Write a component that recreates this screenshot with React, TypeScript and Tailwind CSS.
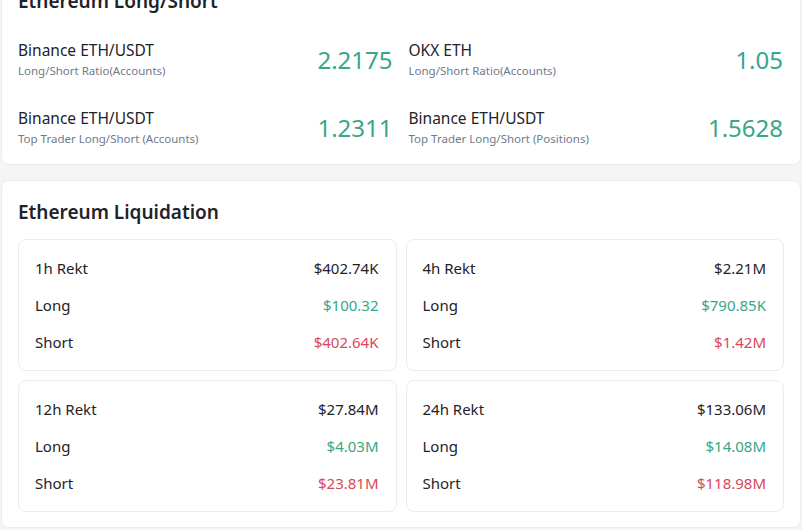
import React from "react";

const ratios = [
  { label: "Binance ETH/USDT", sub: "Long/Short Ratio(Accounts)", value: "2.2175" },
  { label: "OKX ETH", sub: "Long/Short Ratio(Accounts)", value: "1.05" },
  { label: "Binance ETH/USDT", sub: "Top Trader Long/Short (Accounts)", value: "1.2311" },
  { label: "Binance ETH/USDT", sub: "Top Trader Long/Short (Positions)", value: "1.5628" },
];

const liqs = [
  { period: "1h Rekt", total: "$402.74K", long: "$100.32", short: "$402.64K" },
  { period: "4h Rekt", total: "$2.21M", long: "$790.85K", short: "$1.42M" },
  { period: "12h Rekt", total: "$27.84M", long: "$4.03M", short: "$23.81M" },
  { period: "24h Rekt", total: "$133.06M", long: "$14.08M", short: "$118.98M" },
];

export default function App() {
  return (
    <div
      className="w-[802px] h-[530px] overflow-hidden bg-[#f5f5f5]"
      style={{ fontFamily: '"Noto Sans", "Open Sans", sans-serif' }}
    >
      <div className="-mt-[32px] px-[1px] flex flex-col gap-[15px]">
        {/* Long/Short card */}
        <div className="bg-white border border-[#eaecef] rounded-[8px] pl-[16px] pr-[17px] pt-[20px] pb-[17px]">
          <h2 className="text-[19px] leading-[24px] font-semibold text-[#1e2329]">Ethereum Long/Short</h2>
          <div className="mt-[27px] grid grid-cols-2 gap-x-[16px] gap-y-[29px]">
            {ratios.map((r, i) => (
              <div key={i} className="flex items-center justify-between">
                <div className="flex flex-col">
                  <span className="text-[15.5px] leading-[20px] text-[#1e2329]">{r.label}</span>
                  <span className="mt-[3px] text-[11.5px] leading-[16px] text-[#707a8a]">{r.sub}</span>
                </div>
                <span className="text-[24px] leading-[30px] text-[#37a68b]">{r.value}</span>
              </div>
            ))}
          </div>
        </div>

        {/* Liquidation card */}
        <div className="bg-white border border-[#eaecef] rounded-[8px] px-[16px] pt-[19px] pb-[15px]">
          <h2 className="text-[19px] leading-[24px] font-semibold text-[#1e2329]">Ethereum Liquidation</h2>
          <div className="mt-[15px] grid grid-cols-2 gap-[9px]">
            {liqs.map((l, i) => (
              <div
                key={i}
                className="border border-[#eaecef] rounded-[8px] pl-[16px] pr-[17px] pt-[10px] pb-[9px] flex flex-col text-[15px]"
              >
                <div className="h-[37px] flex items-center justify-between">
                  <span className="text-[#1e2329]">{l.period}</span>
                  <span className="text-[#1e2329]">{l.total}</span>
                </div>
                <div className="h-[37px] flex items-center justify-between">
                  <span className="text-[#1e2329]">Long</span>
                  <span className="text-[#37a68b]">{l.long}</span>
                </div>
                <div className="h-[37px] flex items-center justify-between">
                  <span className="text-[#1e2329]">Short</span>
                  <span className="text-[#d9475a]">{l.short}</span>
                </div>
              </div>
            ))}
          </div>
        </div>
      </div>
    </div>
  );
}
